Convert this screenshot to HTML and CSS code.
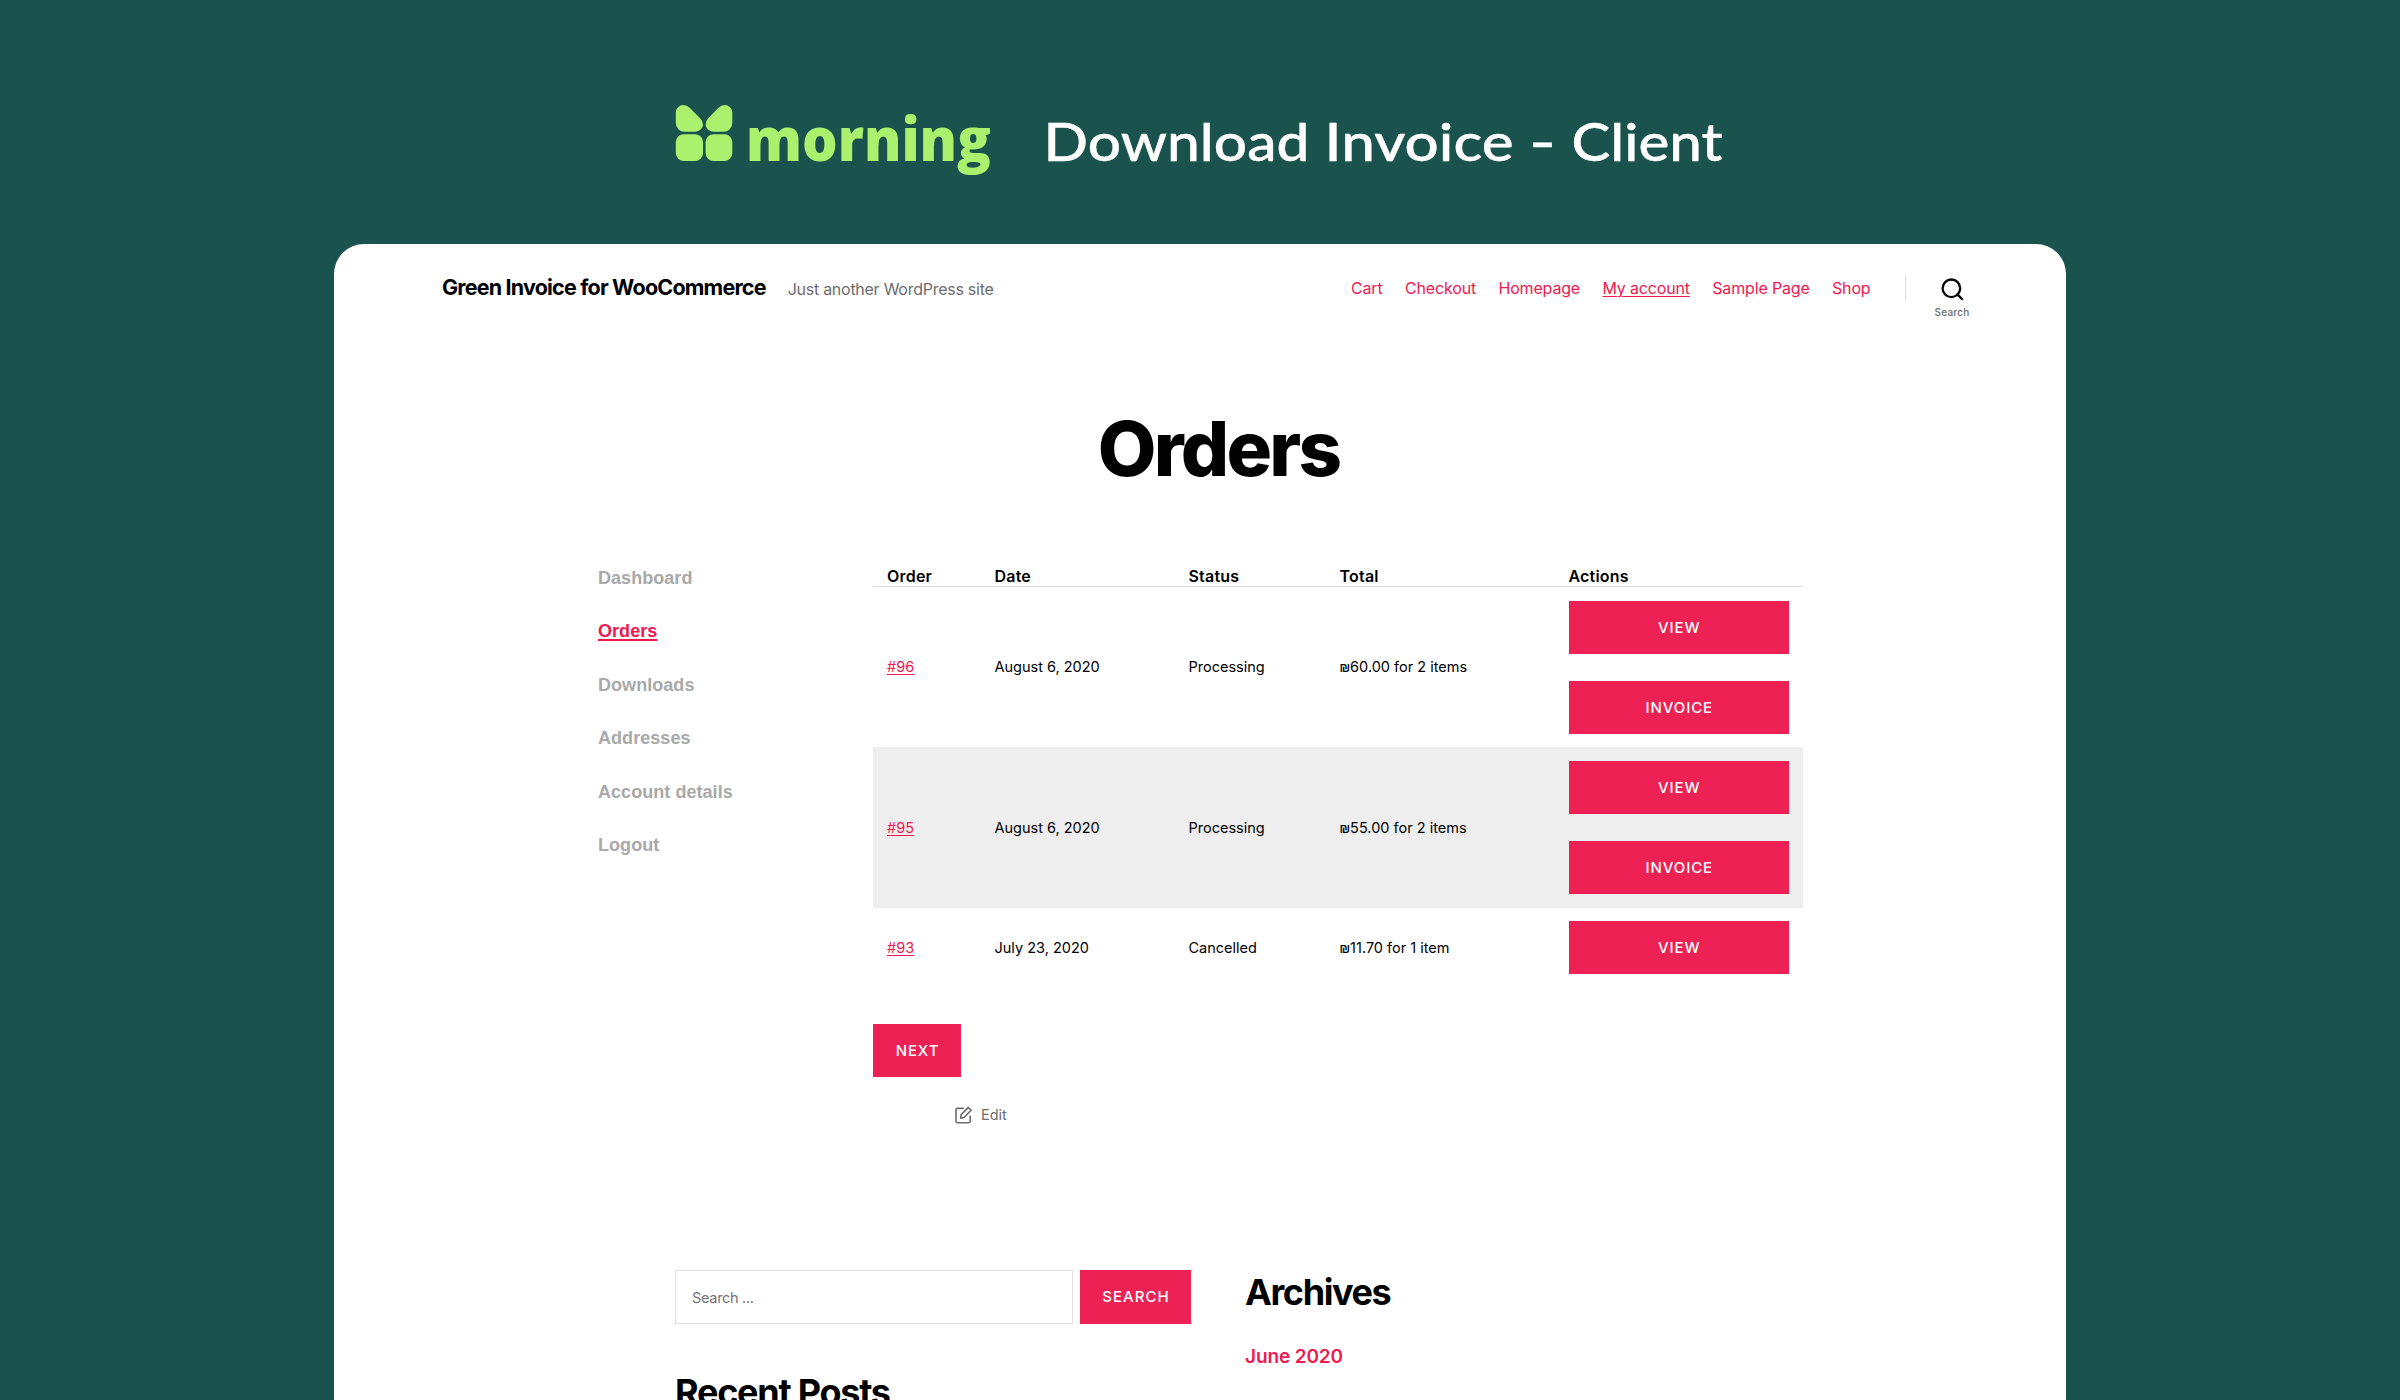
FILE: index.html
```
<!DOCTYPE html>
<html lang="en">
<head>
<meta charset="utf-8">
<title>Orders</title>
<link rel="stylesheet" href="styles.css">
</head>
<body>
<header class="banner">
  <svg class="brand" width="1100" height="100" viewBox="0 0 1100 100">
    <g class="brand-mark">
      <path d="M15.8 22.6A7.6 7.6 0 0 1 23.4 15Q27 15 29.4 17.6L40.4 28.6Q43 31.2 43 34.4A7.6 7.6 0 0 1 35.4 41.7H24.5A8.7 8.7 0 0 1 15.8 33Z"/>
      <path d="M72.3 22.6A7.6 7.6 0 0 0 64.7 15Q61.1 15 58.7 17.6L48 28.6Q45.6 31.2 45.6 34.4A7.6 7.6 0 0 0 53.2 41.7H63.6A8.7 8.7 0 0 0 72.3 33Z"/>
      <rect x="15.8" y="44.2" width="27.2" height="26.9" rx="8"/>
      <rect x="45.6" y="44.2" width="26.7" height="26.9" rx="8"/>
    </g>
    <text class="brand-name" x="86" y="71" textLength="245" lengthAdjust="spacingAndGlyphs">morning</text>
    <g class="brand-title">
      <text x="383.5" y="71" textLength="266" lengthAdjust="spacingAndGlyphs">Download</text>
      <text x="664.5" y="71" textLength="189" lengthAdjust="spacingAndGlyphs">Invoice</text>
      <text x="869" y="71" textLength="27" lengthAdjust="spacingAndGlyphs">-</text>
      <text x="911.5" y="71" textLength="151" lengthAdjust="spacingAndGlyphs">Client</text>
    </g>
  </svg>
</header>
<main class="panel">
  <div class="site-header">
    <div class="site-title">Green Invoice for WooCommerce</div>
    <div class="tagline">Just another WordPress site</div>
    <nav class="nav">
      <a>Cart</a><a>Checkout</a><a>Homepage</a><a class="current">My account</a><a>Sample Page</a><a>Shop</a>
    </nav>
    <div class="divider"></div>
    <div class="search-toggle">
      <svg width="23" height="23" viewBox="0 0 23 23" fill="none" stroke="#000" stroke-width="2.3"><circle cx="10.4" cy="10.3" r="8.8"/><path d="M16.4 16.4L21.2 21.2" stroke-linecap="round"/></svg>
      <span>Search</span>
    </div>
  </div>
  <h1 class="page-title">Orders</h1>
  <div class="account">
    <nav class="side">
      <a>Dashboard</a><a class="active">Orders</a><a>Downloads</a><a>Addresses</a><a>Account details</a><a>Logout</a>
    </nav>
    <section class="content">
      <div class="row head"><div>Order</div><div>Date</div><div>Status</div><div>Total</div><div>Actions</div></div>
      <div class="row"><div><a class="num">#96</a></div><div>August 6, 2020</div><div>Processing</div><div><span class="cur">₪</span>60.00 for 2 items</div><div class="actions"><a class="btn">View</a><a class="btn">Invoice</a></div></div>
      <div class="row alt"><div><a class="num">#95</a></div><div>August 6, 2020</div><div>Processing</div><div><span class="cur">₪</span>55.00 for 2 items</div><div class="actions"><a class="btn">View</a><a class="btn">Invoice</a></div></div>
      <div class="row"><div><a class="num">#93</a></div><div>July 23, 2020</div><div>Cancelled</div><div><span class="cur">₪</span>11.70 for 1 item</div><div class="actions"><a class="btn">View</a></div></div>
      <a class="btn next">Next</a>
      <div class="edit">
        <svg width="18" height="18" viewBox="0 0 18 18" fill="none" stroke="#6d6d6d" stroke-width="1.6" stroke-linejoin="round" stroke-linecap="round"><path d="M8.2 2.4H2.6Q1 2.4 1 4V15.2Q1 16.8 2.6 16.8H13.6Q15.2 16.8 15.2 15.2V10.2"/><path d="M13.2 1.4L16.2 4.3L9 11.5L5.6 12.2L6.2 8.6Z"/></svg>
        <span>Edit</span>
      </div>
    </section>
  </div>
  <footer class="widgets">
    <div class="widget-left">
      <form class="search"><input type="text" placeholder="Search ..."><a class="btn search-btn">Search</a></form>
      <h2 class="recent">Recent Posts</h2>
    </div>
    <div class="widget-right">
      <h2>Archives</h2>
      <a class="month">June 2020</a>
    </div>
  </footer>
</main>
</body>
</html>
```
FILE: styles.css
```
* { box-sizing: border-box; }
body {
  margin: 0;
  height: 1400px;
  overflow: hidden;
  background: #1a534d;
  font-family: Inter, "Liberation Sans", sans-serif;
  color: #000;
}
.banner { height: 244px; padding: 90px 0 0 660px; }
.brand { display: block; overflow: visible; }
.brand-mark { fill: #aaf16d; }
.brand-name { font: 800 61px "Open Sans", sans-serif; fill: #aaf16d; }
.brand-title { font: 500 52.5px Lato, sans-serif; fill: #fff; stroke: #fff; stroke-width: .4px; }

.panel {
  width: 1732px;
  height: 1156px;
  margin-left: 334px;
  overflow: hidden;
  background: #fff;
  border-radius: 30px 30px 0 0;
}
.site-header { display: flex; height: 159px; padding: 28px 96px 0 108px; line-height: 30px; }
.site-title { font-size: 21.5px; font-weight: 700; letter-spacing: -.81px; white-space: nowrap; }
.tagline { margin: 2px 0 0 22px; font-size: 16px; letter-spacing: -.26px; color: #6d6d6d; white-space: nowrap; }
.nav { display: flex; gap: 22.4px; margin: 1px 34px 0 auto; font-size: 16px; letter-spacing: -.16px; color: #f01a50; white-space: nowrap; }
.current { text-decoration: underline; text-decoration-thickness: 1px; text-underline-offset: 2px; }
.divider { width: 1.5px; height: 24px; margin: 4px 28px 0 0; background: #e3e0d8; }
.search-toggle { display: flex; flex-direction: column; align-items: center; width: 36px; padding-top: 6px; font-size: 10px; font-weight: 500; line-height: 14px; letter-spacing: .25px; color: #6d6d6d; }
.search-toggle svg { flex: none; }
.search-toggle span { margin-top: 4px; }

.page-title { margin: 0 227px 0 264px; font-size: 76px; font-weight: 800; line-height: 90px; letter-spacing: -2.8px; text-align: center; }
.account { display: flex; padding: 58px 0 0 264px; }
.side { display: flex; flex-direction: column; width: 275px; padding-top: 1px; font: 700 18px/53.4px "Liberation Sans", Arial, sans-serif; color: #a9a9a9; letter-spacing: .05px; }
.active { color: #f01a50; text-decoration: underline; text-decoration-thickness: 2px; text-underline-offset: 2px; }
.content { width: 930px; }
.row { display: grid; grid-template-columns: 107.5px 194px 151px 229px 248.5px; align-items: center; font-size: 14.5px; line-height: 24px; }
.row > div { padding: 0 14px; white-space: nowrap; }
.head { height: 36px; padding-top: 13px; border-bottom: 1px solid #dcdcdc; font-size: 16px; line-height: 24px; font-weight: 600; letter-spacing: .2px; }
.alt { background: #eee; }
.num { color: #f01a50; text-decoration: underline; text-decoration-thickness: 1px; text-underline-offset: 2px; }
.cur { font: 700 12px "Liberation Sans", sans-serif; }
.row > .actions { display: flex; flex-direction: column; gap: 27px; padding: 13.7px 14px; }
.btn { display: block; height: 53px; background: #ee2154; color: #fff; font-size: 15px; font-weight: 550; line-height: 53px; letter-spacing: .9px; text-indent: 1px; text-align: center; text-transform: uppercase; }
.next { width: 88px; margin-top: 36px; }
.edit { display: flex; align-items: center; gap: 8px; margin: 26px 0 0 82px; font-size: 14.5px; line-height: 24px; color: #6d6d6d; }

.widgets { display: flex; padding: 143px 0 0 341px; }
.widget-left { width: 570px; }
.search { display: flex; gap: 7px; }
.search input { width: 398px; height: 54px; padding: 0 16px; border: 1.5px solid #e0e0e0; font: 14.5px Inter, sans-serif; letter-spacing: -.3px; }
.search input::placeholder { color: #757575; opacity: 1; }
.search-btn { width: 111px; height: 54px; line-height: 54px; letter-spacing: 1px; }
h2 { margin: 0; font-size: 36px; font-weight: 700; line-height: 44px; letter-spacing: -1.25px; }
.widget-right h2 { letter-spacing: -1.4px; }
.recent { margin-top: 46px; }
.month { display: block; margin-top: 29px; font-size: 19px; font-weight: 600; line-height: 28px; letter-spacing: -.12px; color: #f01a50; }
```
